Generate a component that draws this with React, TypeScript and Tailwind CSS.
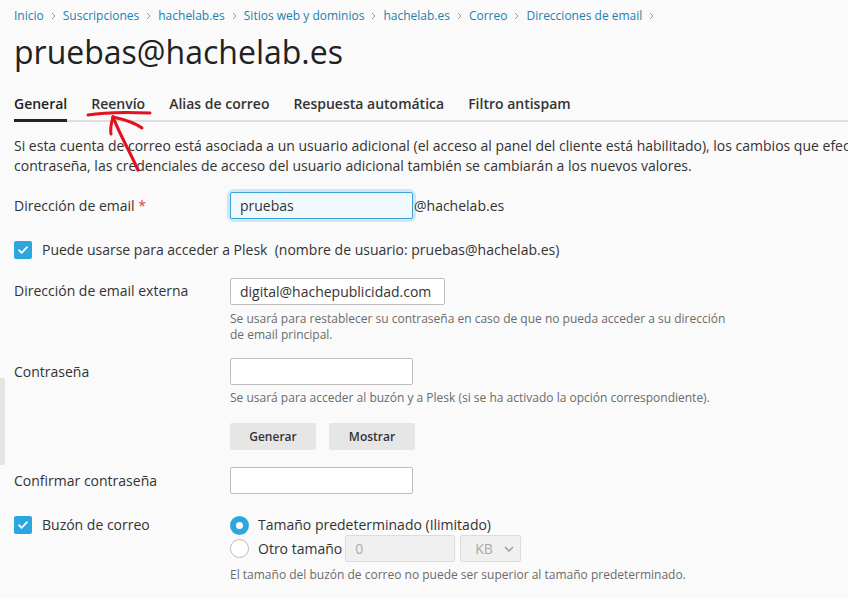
import React from 'react';

const crumbs = ['Inicio', 'Suscripciones', 'hachelab.es', 'Sitios web y dominios', 'hachelab.es', 'Correo', 'Direcciones de email'];
const tabs = ['General', 'Reenvío', 'Alias de correo', 'Respuesta automática', 'Filtro antispam'];

const Check: React.FC = () => (
  <span className="flex h-[18px] w-[18px] shrink-0 items-center justify-center rounded-[2px] bg-[#2ba6de]">
    <svg width="12" height="12" viewBox="0 0 12 12" fill="none">
      <path d="M2 6.2l2.6 2.6L10 3.2" stroke="#fff" strokeWidth="1.8" strokeLinecap="round" strokeLinejoin="round" />
    </svg>
  </span>
);

const Hint: React.FC<{ children: React.ReactNode; className?: string }> = ({ children, className }) => (
  <p className={`text-[12px] leading-[16px] text-[#6b6b6b] ${className || ''}`}>{children}</p>
);

const inputCls = 'h-[27px] rounded-[2px] border border-[#bdbdbd] bg-white px-[9px] text-[14px] text-[#333] outline-none';

const App: React.FC = () => {
  return (
    <div className="relative h-[599px] w-[848px] overflow-hidden bg-[#fafafa] font-['Open_Sans',sans-serif] text-[#333]">
      {/* breadcrumbs */}
      <nav className="flex items-center px-[14px] pt-[8px] text-[12px] leading-[16px]">
        {crumbs.map((c, i) => (
          <span key={i} className="flex items-center">
            <span className="text-[#2281ad]">{c}</span>
            <svg className="mx-[7px]" width="5" height="8" viewBox="0 0 5 8" fill="none">
              <path d="M1 1l3 3-3 3" stroke="#9a9a9a" strokeWidth="1" />
            </svg>
          </span>
        ))}
      </nav>

      <h1 className="mt-[8px] px-[14px] text-[32px] leading-[40px] text-[#222]">pruebas@hachelab.es</h1>

      {/* tabs */}
      <div className="mt-[22px] ml-[14px] flex w-[1000px] gap-[24px] border-b-2 border-[#dedede] text-[14px] font-semibold leading-[20px] text-[#333]">
        {tabs.map((t, i) => (
          <div key={t} className={`-mb-[2px] pb-[5px] ${i === 0 ? 'border-b-[3px] border-[#222] text-[#222]' : 'border-b-[3px] border-transparent'}`}>
            {t}
          </div>
        ))}
      </div>

      <div className="mt-[14px] px-[14px] text-[14px] leading-[20px] text-[#333]">
        <p className="whitespace-nowrap">Si esta cuenta de correo está asociada a un usuario adicional (el acceso al panel del cliente está habilitado), los cambios que efectúe en el nombre y la</p>
        <p className="whitespace-nowrap">contraseña, las credenciales de acceso del usuario adicional también se cambiarán a los nuevos valores.</p>
      </div>

      <div className="mt-[16px] px-[14px] text-[14px] leading-[20px]">
        {/* email */}
        <div className="flex">
          <div className="w-[216px] pt-[4px]">
            Dirección de email <span className="text-[#d9453a]">*</span>
          </div>
          <div className="flex items-center">
            <div className="rounded-[4px] shadow-[0_0_0_3px_#cde7f7]">
              <input className="h-[27px] w-[183px] rounded-[2px] border border-[#3aa3db] bg-[#f0f9fe] px-[9px] text-[14px] text-[#333] outline-none" defaultValue="pruebas" />
            </div>
            <span className="ml-[1px]">@hachelab.es</span>
          </div>
        </div>

        <div className="mt-[21px] flex items-center gap-[10px]">
          <Check />
          <span>Puede usarse para acceder a Plesk&nbsp; (nombre de usuario: pruebas@hachelab.es)</span>
        </div>

        {/* external email */}
        <div className="mt-[18px] flex">
          <div className="w-[216px] pt-[3px]">Dirección de email externa</div>
          <div>
            <input className={`${inputCls} w-[215px]`} defaultValue="digital@hachepublicidad.com" />
            <Hint className="mt-[6px] w-[510px]">Se usará para restablecer su contraseña en caso de que no pueda acceder a su dirección de email principal.</Hint>
          </div>
        </div>

        {/* password */}
        <div className="mt-[15px] flex">
          <div className="w-[216px] pt-[4px]">Contraseña</div>
          <div>
            <input type="password" className={`${inputCls} w-[183px]`} />
            <Hint className="mt-[5px]">Se usará para acceder al buzón y a Plesk (si se ha activado la opción correspondiente).</Hint>
            <div className="mt-[17px] flex gap-[13px]">
              <button className="h-[27px] w-[86px] rounded-[2px] bg-[#e6e6e6] text-[12px] font-semibold text-[#333]">Generar</button>
              <button className="h-[27px] w-[86px] rounded-[2px] bg-[#e6e6e6] text-[12px] font-semibold text-[#333]">Mostrar</button>
            </div>
          </div>
        </div>

        <div className="mt-[17px] flex">
          <div className="w-[216px] pt-[4px]">Confirmar contraseña</div>
          <input type="password" className={`${inputCls} w-[183px]`} />
        </div>

        {/* mailbox */}
        <div className="mt-[21px] flex">
          <div className="flex w-[216px] items-center gap-[10px] self-start">
            <Check />
            <span>Buzón de correo</span>
          </div>
          <div>
            <div className="flex items-center gap-[9px]">
              <span className="flex h-[19px] w-[19px] items-center justify-center rounded-full bg-[#2ba6de]">
                <span className="h-[7px] w-[7px] rounded-full bg-white" />
              </span>
              <span>Tamaño predeterminado (Ilimitado)</span>
            </div>
            <div className="flex items-center">
              <span className="h-[19px] w-[19px] rounded-full border border-[#bdbdbd] bg-white" />
              <span className="ml-[9px]">Otro tamaño</span>
              <div className="ml-[3px] flex h-[27px] w-[110px] items-center rounded-[2px] border border-[#dcdcdc] bg-[#f0f0f0] px-[9px] text-[#aaa]">0</div>
              <div className="ml-[5px] flex h-[27px] w-[61px] items-center justify-between rounded-[2px] border border-[#dcdcdc] bg-[#f0f0f0] pl-[14px] pr-[6px] text-[#aaa]">
                <span>KB</span>
                <svg width="10" height="6" viewBox="0 0 10 6" fill="none">
                  <path d="M1 1l4 4 4-4" stroke="#999" strokeWidth="1.4" />
                </svg>
              </div>
            </div>
            <Hint className="mt-[5px]">El tamaño del buzón de correo no puede ser superior al tamaño predeterminado.</Hint>
          </div>
        </div>
      </div>

      {/* left edge handle */}
      <div className="absolute left-0 top-[378px] h-[87px] w-[5px] rounded-r-[2px] bg-[#e4e4e4]" />

      {/* red annotation */}
      <svg className="pointer-events-none absolute left-0 top-0" width="848" height="599" fill="none">
        <path d="M88 115 C105 112, 128 112, 150 113" stroke="#e3121c" strokeWidth="3" strokeLinecap="round" />
        <path d="M113 117 C120 135, 130 152, 138 170" stroke="#e3121c" strokeWidth="3.2" strokeLinecap="round" />
        <path d="M113 117 C111 124, 110 129, 111 134" stroke="#e3121c" strokeWidth="3" strokeLinecap="round" />
        <path d="M113 117 C122 119, 134 122, 142 128" stroke="#e3121c" strokeWidth="3" strokeLinecap="round" />
      </svg>
    </div>
  );
};

export default App;
